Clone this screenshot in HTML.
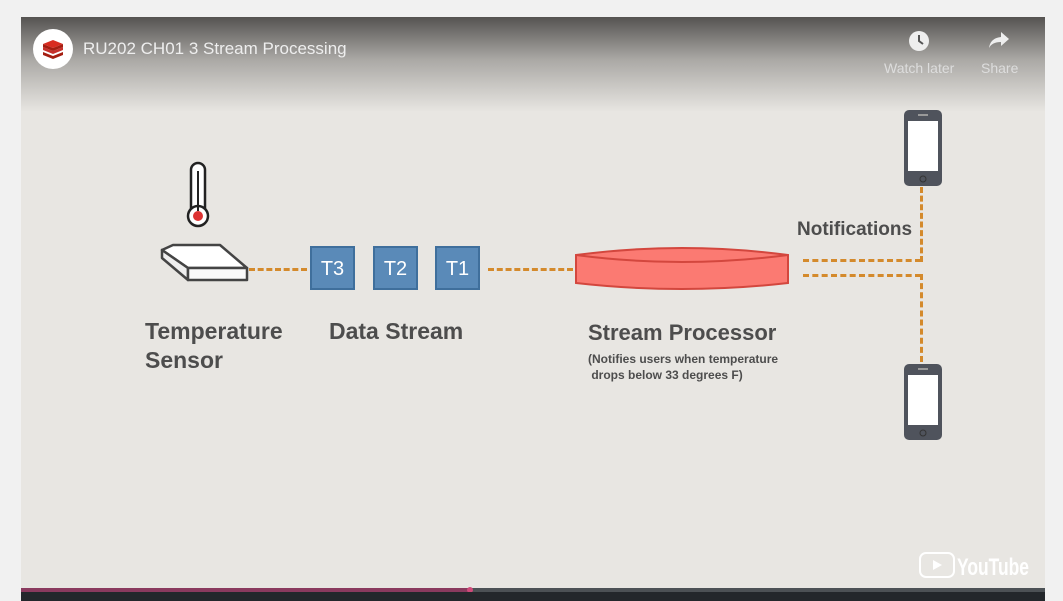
<!DOCTYPE html>
<html><head><style>
body{margin:0;width:1063px;height:601px;background:#f1f1f1;overflow:hidden;position:relative;font-family:"Liberation Sans",sans-serif}
#v{position:absolute;left:21px;top:17px;width:1024px;height:584px;background:#e8e6e2;overflow:hidden}
#top{position:absolute;left:0;top:0;width:100%;height:95px;background:linear-gradient(#555351,rgba(120,118,115,.55) 45%,rgba(232,230,226,0))}
.t{position:absolute;color:#4d4d4d;font-weight:bold;font-family:"Liberation Sans",sans-serif}
.box{position:absolute;top:229px;width:45px;height:44px;background:#5a8ab8;border:2px solid #3f6f9c;color:#fff;font-size:20px;text-align:center;line-height:42px;box-sizing:border-box}
.dh{position:absolute;height:0;border-top:3px dashed #d48a2c}
.dv{position:absolute;width:0;border-left:3px dashed #d48a2c}
</style></head><body>
<div id="v">
<div id="top"></div>
<div style="position:absolute;left:12px;top:12px;width:40px;height:40px;border-radius:50%;background:#fff"></div>
<svg style="position:absolute;left:19px;top:21px" width="26" height="22" viewBox="0 0 26 22"><path d="M3 14l10 4 10-4v3l-10 4-10-4z" fill="#a41e11"/><path d="M3 9l10 4 10-4v3l-10 4-10-4z" fill="#c6302b"/><path d="M3 6l10-4 10 4-10 4z" fill="#d82c20"/><path d="M3 6v3l10 4 10-4V6l-10 4z" fill="#a41e11"/></svg>
<div style="position:absolute;left:62px;top:22px;color:#eee;font-size:17px">RU202 CH01 3 Stream Processing</div>
<svg style="position:absolute;left:887px;top:13px" width="22" height="22"><circle cx="11" cy="11" r="10" fill="#eee"/><path d="M11 5v6l4 3" stroke="#555" stroke-width="2" fill="none"/></svg>
<div style="position:absolute;left:863px;top:43px;color:#ddd;font-size:14px">Watch later</div>
<svg style="position:absolute;left:967px;top:13px" width="22" height="20"><path d="M13 2l8 7-8 7v-4C7 12 3 14 1 18c1-6 4-10 12-11z" fill="#eee"/></svg>
<div style="position:absolute;left:960px;top:43px;color:#ddd;font-size:14px">Share</div>

<svg style="position:absolute;left:0;top:0" width="260" height="300">
<rect x="170" y="146" width="14" height="52" rx="7" fill="#fff" stroke="#222" stroke-width="2.5"/>
<circle cx="177" cy="199" r="10" fill="#fff" stroke="#222" stroke-width="2.5"/>
<path d="M177 154v40" stroke="#222" stroke-width="2"/>
<circle cx="177" cy="199" r="5" fill="#d33"/>
<path d="M141 233l11-5h47l27 23h-59z" fill="#fff" stroke="#444" stroke-width="2.5" stroke-linejoin="round"/>
<path d="M141 233v8l26 22v-12z" fill="#eee" stroke="#444" stroke-width="2.5" stroke-linejoin="round"/>
<path d="M167 251h59v12h-59z" fill="#fafafa" stroke="#444" stroke-width="2.5" stroke-linejoin="round"/>
</svg>
<div class="dh" style="left:228px;top:251px;width:58px"></div>
<div class="box" style="left:289px">T3</div>
<div class="box" style="left:352px">T2</div>
<div class="box" style="left:414px">T1</div>
<div class="dh" style="left:467px;top:251px;width:85px"></div>
<svg style="position:absolute;left:553px;top:228px" width="218" height="46"><path d="M2 10 Q108 -4 214 10 V38 Q108 50 2 38Z" fill="#fb7a72" stroke="#d3473e" stroke-width="2"/><path d="M2 10 Q108 24 214 10" fill="none" stroke="#d3473e" stroke-width="2"/></svg>
<div class="dh" style="left:782px;top:242px;width:118px"></div>
<div class="dh" style="left:782px;top:257px;width:118px"></div>
<div class="dv" style="left:899px;top:170px;height:75px"></div>
<div class="dv" style="left:899px;top:257px;height:88px"></div>
<svg style="position:absolute;left:882px;top:92px" width="40" height="78"><rect x="1" y="1" width="38" height="76" rx="5" fill="#4f535c"/><rect x="5" y="12" width="30" height="50" fill="#fff"/><rect x="15" y="5" width="10" height="2" fill="#999"/><circle cx="20" cy="70" r="3" fill="none" stroke="#333"/></svg>
<svg style="position:absolute;left:882px;top:346px" width="40" height="78"><rect x="1" y="1" width="38" height="76" rx="5" fill="#4f535c"/><rect x="5" y="12" width="30" height="50" fill="#fff"/><rect x="15" y="5" width="10" height="2" fill="#999"/><circle cx="20" cy="70" r="3" fill="none" stroke="#333"/></svg>

<div class="t" style="left:124px;top:300px;font-size:23px;line-height:29px">Temperature<br>Sensor</div>
<div class="t" style="left:308px;top:300px;font-size:23px;line-height:29px">Data Stream</div>
<div class="t" style="left:567px;top:301px;font-size:22px;line-height:29px">Stream Processor</div>
<div class="t" style="left:567px;top:334px;font-size:12px;line-height:16px">(Notifies users when temperature<br>&nbsp;drops below 33 degrees F)</div>
<div class="t" style="left:776px;top:202px;font-size:19px">Notifications</div>

<svg style="position:absolute;left:898px;top:535px" width="112" height="26"><rect x="1" y="1" width="34" height="24" rx="6" fill="none" stroke="#fff" stroke-width="2"/><path d="M14 8l9 5-9 5z" fill="#fff"/><text x="38" y="23" fill="#fff" font-family="Liberation Sans Narrow,Liberation Sans,sans-serif" font-weight="bold" font-size="24" textLength="72" lengthAdjust="spacingAndGlyphs">YouTube</text></svg>

<div style="position:absolute;left:0;top:571px;width:100%;height:4px;background:#4c5155"></div>
<div style="position:absolute;left:0;top:571px;width:449px;height:4px;background:#8a3a5e"></div>
<div style="position:absolute;left:446px;top:570px;width:6px;height:6px;border-radius:50%;background:#d04a7a"></div>
<div style="position:absolute;left:0;top:575px;width:100%;height:9px;background:#23272b"></div>
</div>
</body></html>
